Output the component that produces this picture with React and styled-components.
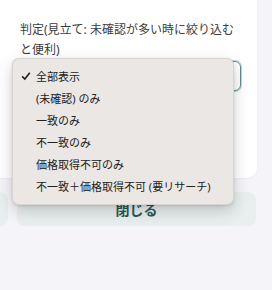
import React from 'react';
import styled, { createGlobalStyle } from 'styled-components';

const GlobalStyle = createGlobalStyle`
	html, body {
		margin: 0;
		padding: 0;
		background: #f5f5f9;
		font-family: "Noto Sans", "Noto Sans CJK JP", sans-serif;
		overflow: hidden;
	}
`;

const Page = styled.div`
	width: 272px;
	height: 290px;
	position: relative;
	overflow: hidden;
`;

const Card = styled.div`
	margin: -12px 15px 0 -12px;
	padding: 32px 16px 0 32px;
	height: 158px;
	background: #fff;
	border-radius: 10px;
	box-shadow: 0 1px 2px rgba(0, 0, 0, 0.04);
	position: relative;
`;

const Label = styled.div`
	font-size: 12px;
	line-height: 20px;
	color: #3b3b3b;
	margin-bottom: 1px;
`;

const SelectBox = styled.div`
	height: 30px;
	border: 1px solid #5d8b8b;
	box-shadow: 0 0 0 1px rgba(93, 139, 139, 0.35);
	border-radius: 6px;
	display: flex;
	align-items: center;
	justify-content: flex-end;
	padding-right: 6px;
	box-sizing: border-box;
`;

const Menu = styled.div`
	position: absolute;
	left: 12px;
	top: 58px;
	width: 222px;
	padding: 6px 0 7px;
	background: #ebe7e5;
	border: 1px solid rgba(0, 0, 0, 0.08);
	border-radius: 7px;
	box-shadow: 0 6px 16px rgba(0, 0, 0, 0.18), 0 1px 3px rgba(0, 0, 0, 0.12);
	box-sizing: border-box;
	z-index: 2;
`;

const Item = styled.div`
	height: 22px;
	display: flex;
	align-items: center;
	padding-left: 8px;
	font-size: 11px;
	color: #222;
	white-space: nowrap;
`;

const CheckSlot = styled.span`
	width: 10px;
	margin-right: 5px;
	display: inline-flex;
	align-items: center;
	justify-content: center;
`;

const ButtonRow = styled.div`
	display: flex;
	gap: 9px;
	margin: 14px 16px 0 -100px;
`;

const Button = styled.button`
	height: 34px;
	border: none;
	border-radius: 8px;
	background: #e8efee;
	color: #2c5656;
	font-family: inherit;
	font-size: 14px;
	font-weight: 700;
	flex: ${props => (props.grow ? 1 : '0 0 108px')};
`;

const options = [
	'全部表示',
	'(未確認) のみ',
	'一致のみ',
	'不一致のみ',
	'価格取得不可のみ',
	'不一致＋価格取得不可 (要リサーチ)',
];

export default function App() {
	return (
		<Page>
			<GlobalStyle />
			<Card>
				<Label>判定(見立て: 未確認が多い時に絞り込むと便利)</Label>
				<SelectBox>
					<svg width="8" height="8" viewBox="0 0 8 8">
						<path d="M1 3 L4 6 L7 3" fill="none" stroke="#111" strokeWidth="1.6" />
					</svg>
				</SelectBox>
			</Card>
			<ButtonRow>
				<Button />
				<Button grow>閉じる</Button>
			</ButtonRow>
			<Menu>
				{options.map((o, i) => (
					<Item key={o}>
						<CheckSlot>
							{i === 0 && (
								<svg width="10" height="10" viewBox="0 0 10 10">
									<path d="M1.2 5.4 L3.8 8 L8.8 1.8" fill="none" stroke="#222" strokeWidth="1.6" />
								</svg>
							)}
						</CheckSlot>
						<span>{o}</span>
					</Item>
				))}
			</Menu>
		</Page>
	);
}
